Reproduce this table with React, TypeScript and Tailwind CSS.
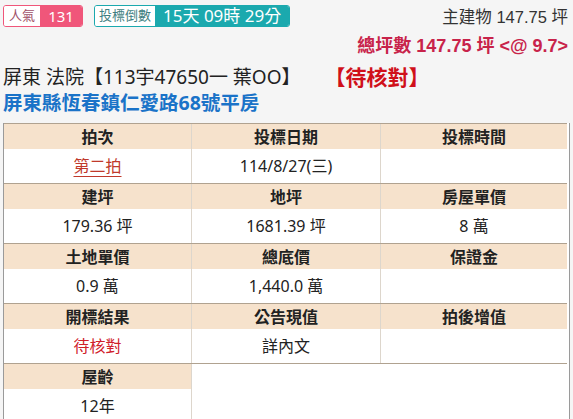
import React from "react";

type Cell = { label: string; value?: React.ReactNode };

const groups: Cell[][] = [
  [
    {
      label: "拍次",
      value: <span className="text-[#c0392b] underline underline-offset-4 decoration-1">第二拍</span>,
    },
    { label: "投標日期", value: "114/8/27(三)" },
    { label: "投標時間" },
  ],
  [
    { label: "建坪", value: "179.36 坪" },
    { label: "地坪", value: "1681.39 坪" },
    { label: "房屋單價", value: "8 萬" },
  ],
  [
    { label: "土地單價", value: "0.9 萬" },
    { label: "總底價", value: "1,440.0 萬" },
    { label: "保證金" },
  ],
  [
    { label: "開標結果", value: <span className="text-[#d0202a]">待核對</span> },
    { label: "公告現值", value: "詳內文" },
    { label: "拍後增值" },
  ],
];

function InfoCell({ cell, last }: { cell: Cell; last?: boolean }) {
  return (
    <div className={`flex flex-col ${last ? "" : "border-r border-[#ddd6cc]"}`}>
      <div className="flex h-[25px] items-center justify-center bg-[#f6e2cc] text-[16px] font-bold text-[#222]">
        {cell.label}
      </div>
      <div className="flex h-[34px] items-center justify-center bg-white text-[16px] text-[#222]">
        {cell.value}
      </div>
    </div>
  );
}

export default function App() {
  return (
    <main
      className="h-[419px] w-[573px] overflow-hidden bg-[#f5f5f5]"
      style={{ fontFamily: '"Noto Sans", "Noto Sans CJK TC", sans-serif' }}
    >
      <div className="flex items-start justify-between pl-[3px] pr-[5px] pt-[5px]">
        <div className="flex gap-[11px]">
          <div className="flex h-[22px] overflow-hidden rounded-[3px] border border-[#f0567a]">
            <span className="flex items-center bg-white px-[5px] text-[13px] text-[#a05068]">人氣</span>
            <span className="flex w-[42px] items-center justify-center bg-[#f0567a] text-[15px] text-white">
              131
            </span>
          </div>
          <div className="flex h-[22px] overflow-hidden rounded-[3px] border border-[#1ba9ae]">
            <span className="flex items-center bg-white px-[4px] text-[13px] text-[#3f7f82]">投標倒數</span>
            <span className="flex items-center bg-[#1ba9ae] px-[8px] text-[17px] text-white">
              15天 09時 29分
            </span>
          </div>
        </div>
        <div className="flex flex-col items-end">
          <span
            className="text-[16.5px] leading-[24px] text-[#333]"
            style={{ fontFamily: '"Liberation Sans", "Noto Sans CJK TC", sans-serif' }}
          >
            主建物 147.75 坪
          </span>
          <span
            className="mt-[5px] text-[18px] font-bold leading-[24px] text-[#c8234a]"
            style={{ fontFamily: '"Liberation Sans", "Noto Sans CJK TC", sans-serif' }}
          >
            總坪數 147.75 坪 &lt;@ 9.7&gt;
          </span>
        </div>
      </div>

      <div className="mt-[6px] px-[3px]">
        <div className="flex items-center leading-[26px] text-[#222]">
          <span className="text-[19px]">屏東 法院【113宇47650一 葉OO】</span>
          <span className="ml-[24px] text-[21px] font-bold text-[#d0101a]">【待核對】</span>
        </div>
        <div className="text-[19.5px] font-bold leading-[26px] text-[#1a73c8]">屏東縣恆春鎮仁愛路68號平房</div>
      </div>

      <div className="mx-[3px] mt-[7px] border-x border-[#9a9a9a] bg-white pr-[2px]">
        {groups.map((row, i) => (
          <div key={i} className="grid grid-cols-[188px_189px_1fr] border-t border-[#b0a290]">
            {row.map((cell, j) => (
              <InfoCell key={j} cell={cell} last={j === 2} />
            ))}
          </div>
        ))}
        <div className="grid grid-cols-[188px_1fr] border-t border-[#b0a290]">
          <InfoCell cell={{ label: "屋齡", value: "12年" }} />
          <div className="bg-white" />
        </div>
      </div>
    </main>
  );
}
